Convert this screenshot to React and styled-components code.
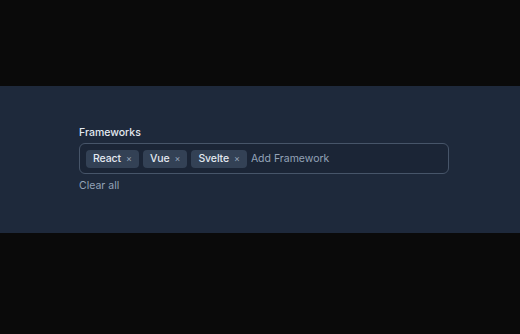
import React, { useState } from "react";
import styled, { createGlobalStyle } from "styled-components";

const Global = createGlobalStyle`
  html, body {
    margin: 0;
    padding: 0;
    background: #0a0a0a;
    font-family: Inter, "Noto Sans", sans-serif;
  }
  body {
    padding-top: 86px;
  }
`;

export default function App() {
  const [tags, setTags] = useState(["React", "Vue", "Svelte"]);

  return (
    <>
      <Global />
      <Panel>
        <Field>
          <Label>Frameworks</Label>
          <Box>
            {tags.map((t) => (
              <Tag key={t}>
                {t}
                <Remove onClick={() => setTags(tags.filter((x) => x !== t))}>×</Remove>
              </Tag>
            ))}
            <Input placeholder="Add Framework" />
          </Box>
          <Clear onClick={() => setTags([])}>Clear all</Clear>
        </Field>
      </Panel>
    </>
  );
}

const Panel = styled.div`
  background: #1e293b;
  padding: 39px 0 40px 79px;
  height: 147px;
  box-sizing: border-box;
`;

const Field = styled.div`
  width: 370px;
  display: flex;
  flex-direction: column;
`;

const Label = styled.label`
  font-size: 10.5px;
  line-height: 16px;
  font-weight: 500;
  color: #e2e8f0;
  margin-bottom: 2px;
`;

const Box = styled.div`
  display: flex;
  align-items: center;
  gap: 4px;
  height: 31px;
  box-sizing: border-box;
  padding: 0 6px;
  border: 1px solid #475569;
  border-radius: 6px;
  background: #1b2536;
`;

const Tag = styled.span`
  display: inline-flex;
  align-items: center;
  gap: 5px;
  height: 18px;
  padding: 0 7px 0 7px;
  border-radius: 4px;
  background: #334155;
  color: #e2e8f0;
  font-size: 10.5px;
  font-weight: 500;
  letter-spacing: -0.1px;
`;

const Remove = styled.span`
  color: #94a3b8;
  font-size: 9px;
  font-weight: 400;
  cursor: pointer;
`;

const Input = styled.input`
  flex: 1;
  min-width: 0;
  border: none;
  outline: none;
  background: transparent;
  color: #e2e8f0;
  font-family: inherit;
  font-size: 10.5px;
  padding: 0;
  &::placeholder {
    color: #94a3b8;
  }
`;

const Clear = styled.button`
  align-self: flex-start;
  margin-top: 4px;
  padding: 0;
  border: none;
  background: none;
  color: #94a3b8;
  font-family: inherit;
  font-size: 10.5px;
  line-height: 16px;
  cursor: pointer;
`;
